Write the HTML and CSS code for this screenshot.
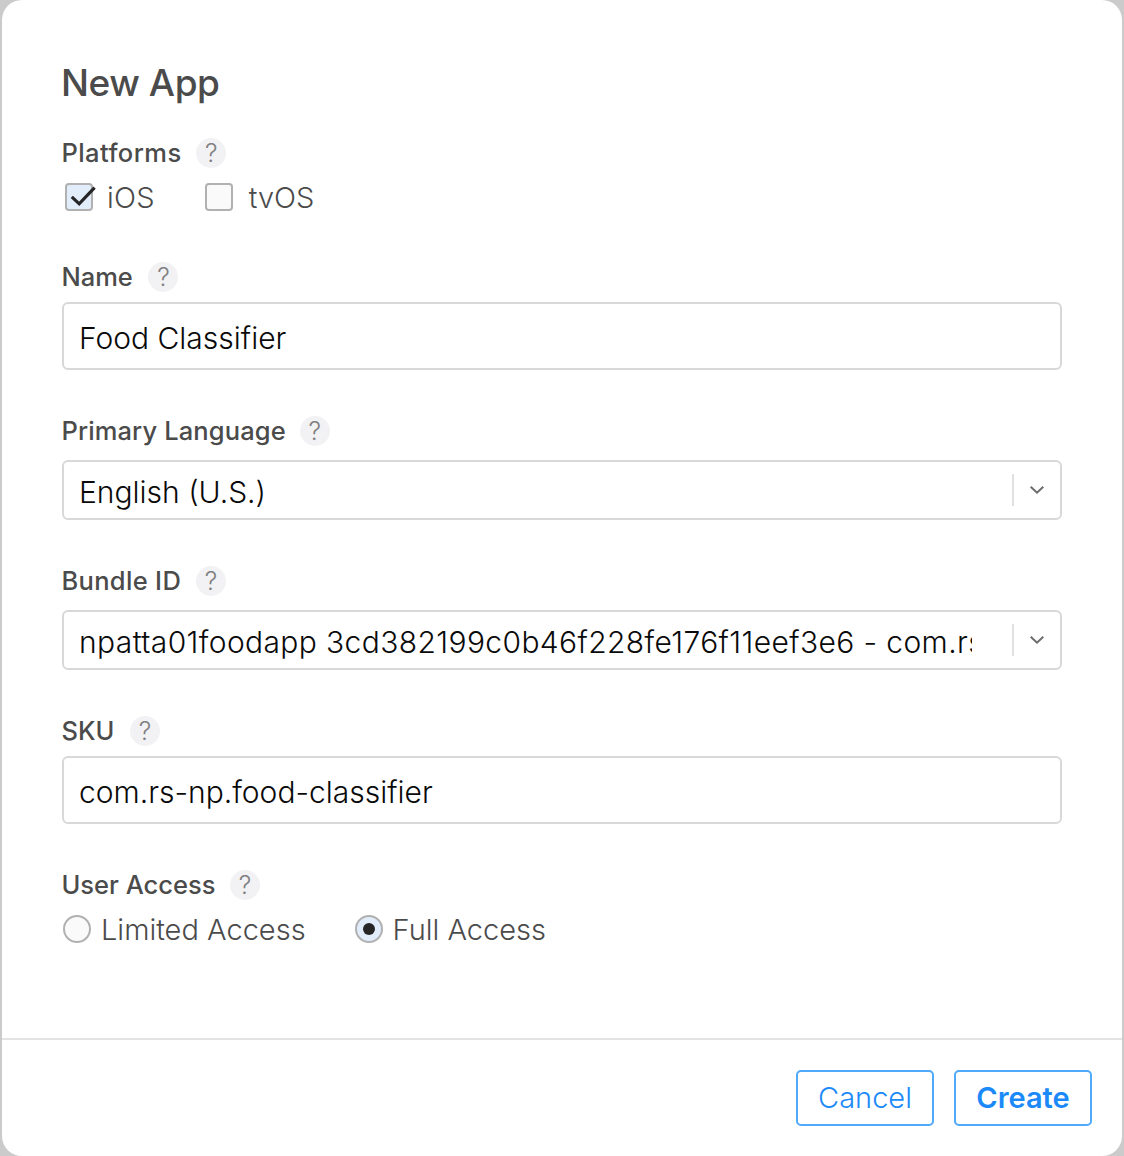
FILE: index.html
```html
<!DOCTYPE html>
<html lang="en">
<head>
<meta charset="utf-8">
<title>New App</title>
<link rel="stylesheet" href="styles.css">
</head>
<body>
<main class="dialog">
  <div class="body">
    <h1 class="title">New App</h1>

    <section class="field platforms">
      <div class="label"><span>Platforms</span><span class="help">?</span></div>
      <div class="options checks">
        <span class="option"><span class="checkbox checked"><svg class="tick" viewBox="0 0 30 28" width="30" height="28"><path d="M5.8 12.8 L13.2 19.8 L28.6 3.6" fill="none" stroke="#262628" stroke-width="3.2"/></svg></span><span>iOS</span></span>
        <span class="option"><span class="checkbox"></span><span class="tvos">tvOS</span></span>
      </div>
    </section>

    <section class="field name">
      <div class="label"><span>Name</span><span class="help">?</span></div>
      <div class="input">Food Classifier</div>
    </section>

    <section class="field language">
      <div class="label"><span>Primary Language</span><span class="help">?</span></div>
      <div class="select"><span class="value">English (U.S.)</span><span class="arrow"><svg viewBox="0 0 16 10" width="16" height="10"><path d="M1.7 1.7 L8 7.7 L14.3 1.7" fill="none" stroke="#6c6c6e" stroke-width="2"/></svg></span></div>
    </section>

    <section class="field bundle">
      <div class="label"><span>Bundle ID</span><span class="help">?</span></div>
      <div class="select"><span class="value">npatta01foodapp 3cd382199c0b46f228fe176f11eef3e6 - com.rs</span><span class="arrow"><svg viewBox="0 0 16 10" width="16" height="10"><path d="M1.7 1.7 L8 7.7 L14.3 1.7" fill="none" stroke="#6c6c6e" stroke-width="2"/></svg></span></div>
    </section>

    <section class="field sku">
      <div class="label"><span>SKU</span><span class="help">?</span></div>
      <div class="input">com.rs-np.food-classifier</div>
    </section>

    <section class="field access">
      <div class="label"><span>User Access</span><span class="help">?</span></div>
      <div class="options radios">
        <span class="option"><span class="radio"></span><span>Limited Access</span></span>
        <span class="option"><span class="radio selected"></span><span>Full Access</span></span>
      </div>
    </section>
  </div>
  <footer class="footer">
    <button class="button">Cancel</button>
    <button class="button primary">Create</button>
  </footer>
</main>
</body>
</html>
```

FILE: styles.css
```css
* { box-sizing: border-box; }
body {
  margin: 0;
  padding: 0 2px;
  background: #cbcbcb;
  font-family: Inter, "Liberation Sans", sans-serif;
  color: #4b4b4b;
}
.dialog {
  display: flex;
  flex-direction: column;
  height: 1156px;
  background: #fff;
  border-radius: 20px;
  overflow: hidden;
}
.body { height: 1038px; padding: 60px 60px 0; }
.title {
  display: flex;
  align-items: center;
  height: 44px;
  margin: 0 0 34px -1px;
  font-size: 37px;
  font-weight: 500;
  letter-spacing: -0.45px;
  white-space: nowrap;
}
.label {
  display: flex;
  align-items: center;
  gap: 15px;
  height: 30px;
  margin-left: -0.6px;
  font-size: 25.5px;
  font-weight: 500;
  line-height: 30px;
  white-space: nowrap;
}
.platforms .label { gap: 14.6px; letter-spacing: 0.44px; }
.name .label { gap: 15.6px; }
.language .label { gap: 14px; letter-spacing: 0.12px; }
.bundle .label { letter-spacing: 0.33px; }
.sku .label { gap: 15.6px; }
.access .label { gap: 14.6px; }
.help {
  width: 30px;
  height: 30px;
  border-radius: 50%;
  background: #f2f2f4;
  color: #808082;
  font-size: 25px;
  font-weight: 300;
  letter-spacing: 0;
  text-align: center;
}
.platforms { height: 124px; }
.name { height: 154px; }
.language, .bundle { height: 150px; }
.sku { height: 154px; }

.options {
  display: flex;
  height: 30px;
  margin-top: 14px;
  font-size: 29px;
  font-weight: 300;
  line-height: 30px;
  white-space: nowrap;
}
.option { display: flex; align-items: center; }
.option > span:last-child { padding-top: 2px; }
.checks { gap: 50px; padding-left: 3px; }
.checks .option { gap: 14px; letter-spacing: 0.2px; }
.option .tvos { padding-left: 2px; letter-spacing: 0; }
.radios { gap: 49px; padding-left: 1px; }
.radios .option { gap: 10px; }
.checkbox, .radio {
  display: flex;
  width: 28px;
  height: 28px;
  border: 2px solid #b1b1b1;
  background: #fafafa;
}
.checkbox { border-radius: 4px; }
.checked { background: #e1edfb; }
.tick { flex: none; margin: -1px 0 0 -1px; }
.radio { align-items: center; justify-content: center; border-radius: 50%; }
.selected { background: #e1edfb; }
.selected::before {
  content: "";
  width: 12px;
  height: 12px;
  border-radius: 50%;
  background: #262626;
}
.input, .select {
  display: flex;
  align-items: center;
  border: 2px solid #d8d8d8;
  border-radius: 6px;
  padding-left: 15px;
  color: #0a0a0a;
  font-size: 30px;
  font-weight: 300;
  line-height: 40px;
  white-space: nowrap;
}
.input { height: 68px; margin-top: 10px; padding-top: 3px; }
.select { height: 60px; margin-top: 14px; }
.value { width: 893px; overflow: hidden; padding-top: 3px; }
.bundle .value { letter-spacing: 0.38px; }
.arrow {
  display: flex;
  align-items: center;
  justify-content: center;
  width: 48px;
  height: 32px;
  margin-left: auto;
  border-left: 2px solid #e0e0e0;
}
.footer {
  display: flex;
  justify-content: flex-end;
  gap: 20px;
  height: 118px;
  padding: 30px 30px 0;
  border-top: 2px solid #e3e3e3;
}
.button {
  width: 138px;
  height: 56px;
  padding: 0 0 2px;
  border: 2px solid #50a9fa;
  border-radius: 5px;
  background: #fff;
  color: #1b8af8;
  font-family: inherit;
  font-size: 29px;
  font-weight: 300;
}
.primary { font-weight: 600; }
```
